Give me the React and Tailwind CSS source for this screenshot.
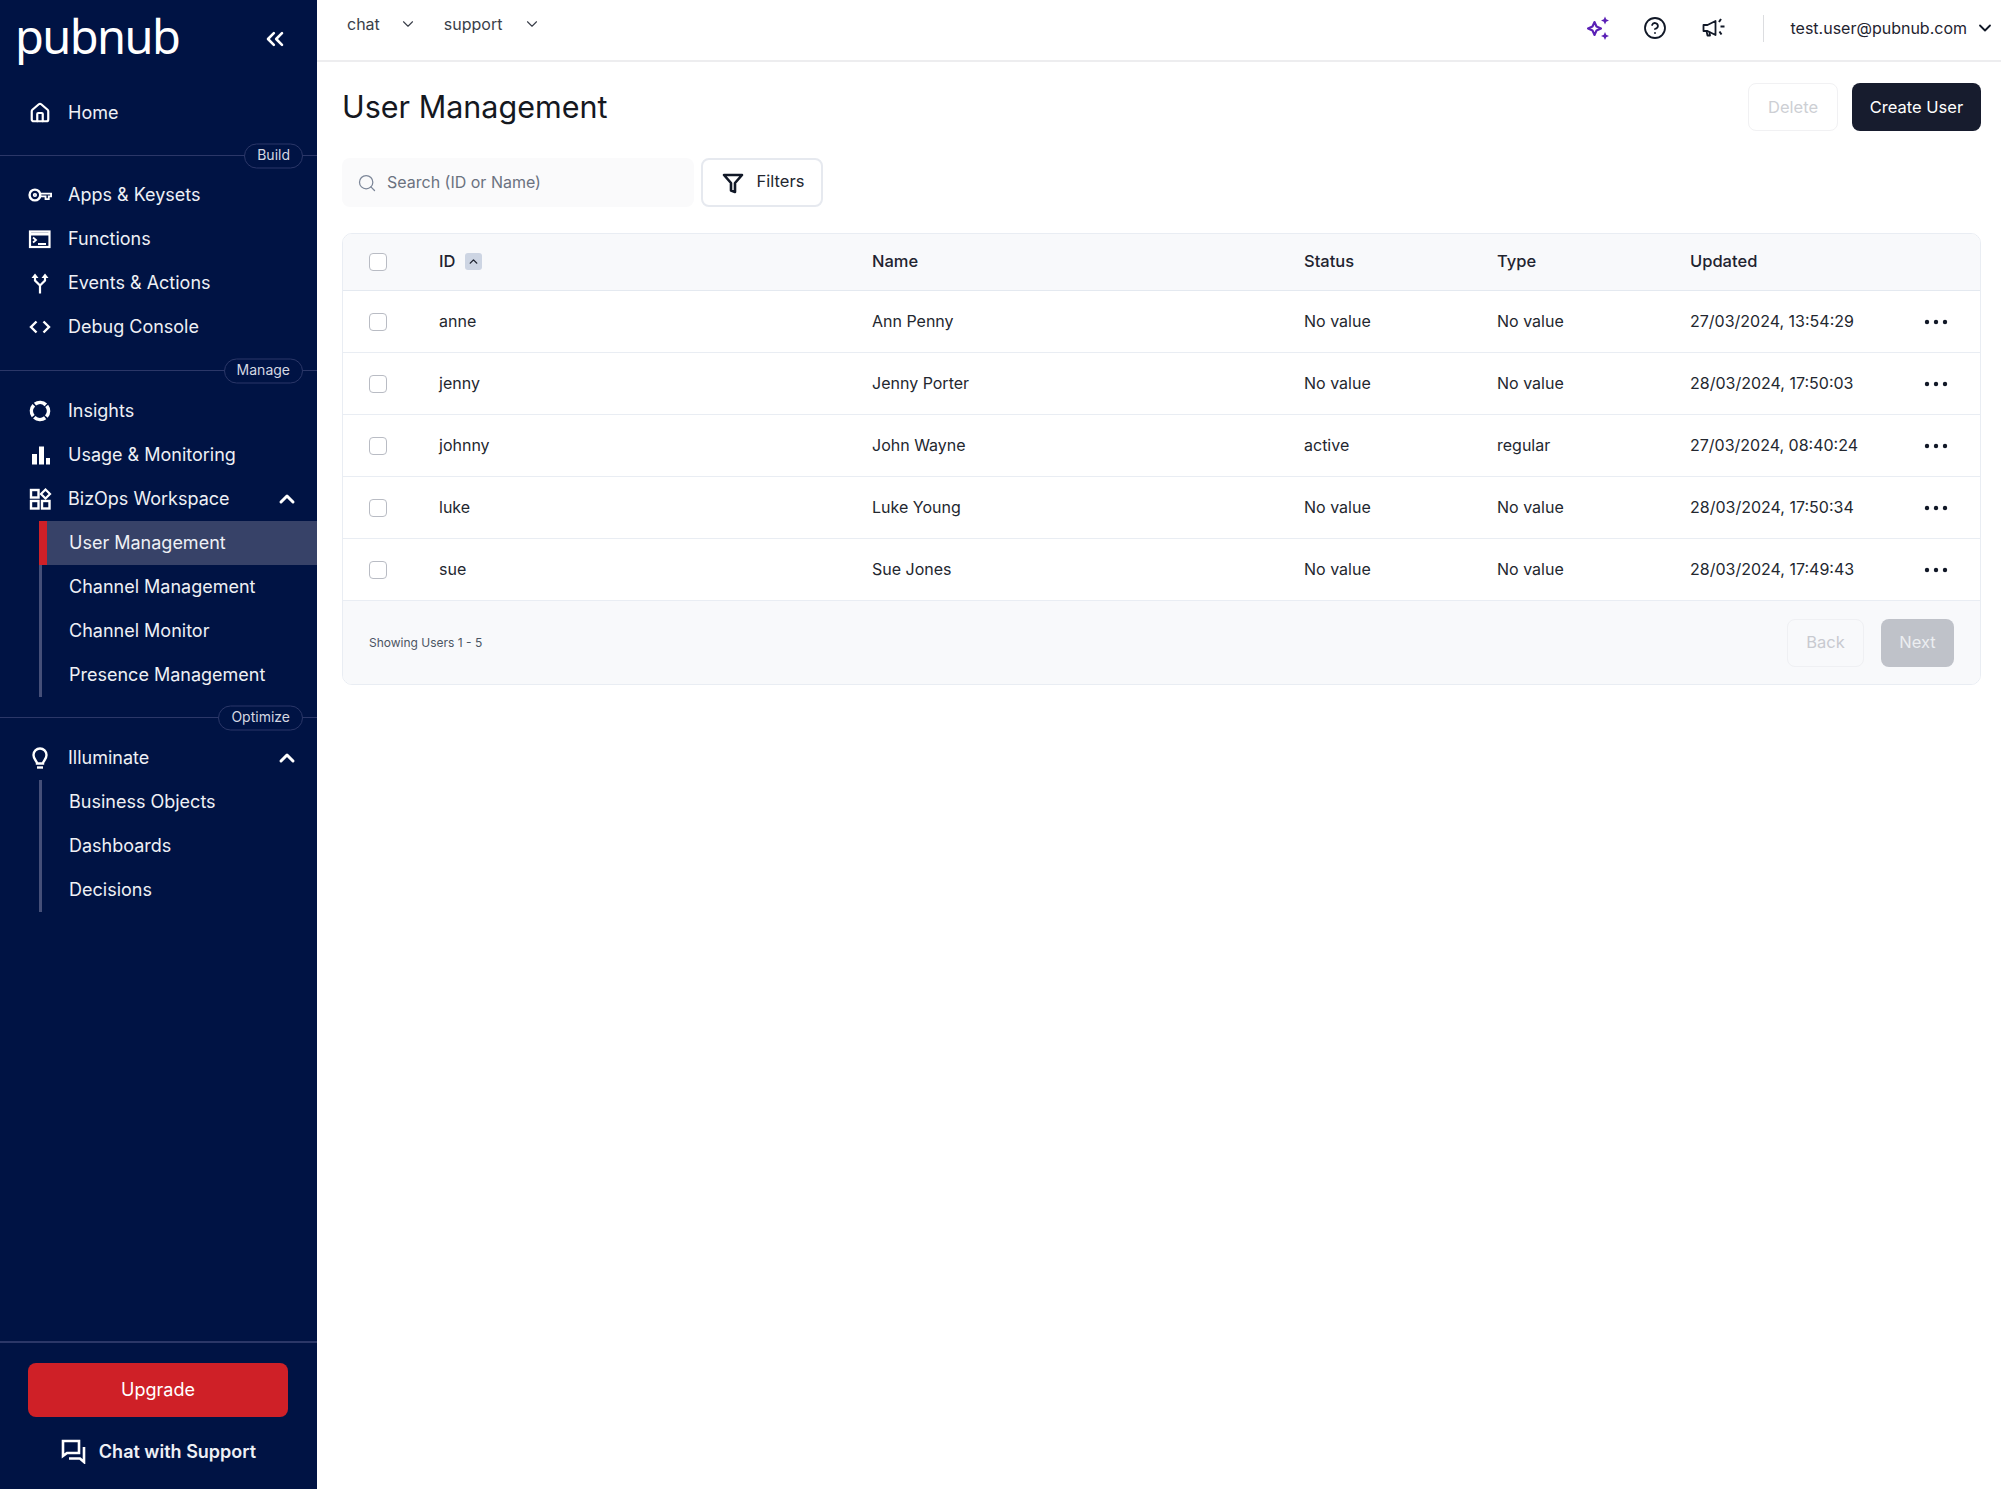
import React from "react";
import { ChevronDown, ChevronUp, ChevronsLeft, CircleHelp, House, Search } from "lucide-react";

const FONT = "font-['Inter','Liberation_Sans',sans-serif]";

// sidebar icons, drawn to match the reference
const KeyIcon = () => (
  <svg width="26" height="24" viewBox="0 0 26 24" fill="none" stroke="white" strokeWidth="2.6">
    <circle cx="7.5" cy="12" r="5.8" />
    <circle cx="7.5" cy="12" r="1.4" strokeWidth="1.8" />
    <path d="M13.5 10.5H25v3h-2.5v3H19v-3h-5" strokeWidth="2" />
  </svg>
);

const TerminalIcon = () => (
  <svg width="24" height="24" viewBox="0 0 24 24" fill="none" stroke="white">
    <rect x="2" y="4.5" width="19.5" height="15.5" strokeWidth="2.2" />
    <path d="M2 7h19.5" strokeWidth="3" />
    <path d="M5 10.5l3 2.5-3 2.5M10 17h8" strokeWidth="1.8" />
  </svg>
);

const ForkIcon = () => (
  <svg width="24" height="24" viewBox="0 0 24 24" fill="none" stroke="white" strokeWidth="2.2">
    <path d="M12 22.5v-8L7 9.5V6M12 14.5l5-5V6" />
    <path d="M3.5 7L7 2.5 10.5 7zM13.5 7L17 2.5 20.5 7z" fill="white" stroke="none" />
  </svg>
);

const CodeIcon = () => (
  <svg width="24" height="24" viewBox="0 0 24 24" fill="none" stroke="white" strokeWidth="2.4">
    <path d="M8.5 6.5L3 12l5.500 5.500M15.500 6.500L21 12l-5.500 5.500" />
  </svg>
);

const InsightsIcon = () => (
  <svg width="24" height="24" viewBox="0 0 24 24" fill="none" stroke="white" strokeWidth="3.6">
    <circle cx="12" cy="12" r="8.5" strokeDasharray="11.7 1.65" transform="rotate(-38 12 12)" />
  </svg>
);

const BarsIcon = () => (
  <svg width="24" height="24" viewBox="0 0 24 24" fill="white">
    <rect x="4" y="11" width="5" height="10.5" />
    <rect x="11" y="3.5" width="5" height="18" />
    <rect x="18" y="15" width="4" height="6.5" />
  </svg>
);

const WidgetsIcon = () => (
  <svg width="24" height="24" viewBox="0 0 24 24" fill="none" stroke="white" strokeWidth="2.4">
    <rect x="3" y="3" width="7.5" height="7.5" />
    <rect x="3" y="14" width="7.5" height="7.5" />
    <rect x="14" y="14" width="7.5" height="7.5" />
    <path d="M17.5 2.5l4.5 4.5-4.5 4.5L13 7z" strokeWidth="2.2" />
  </svg>
);

const BulbIcon = () => (
  <svg width="24" height="24" viewBox="0 0 24 24" fill="none" stroke="white" strokeWidth="2.4">
    <path d="M9 17.5c0-2.5-3.5-4-3.5-8.5a6.5 6.5 0 0 1 13 0c0 4.5-3.5 6-3.5 8.5z" />
    <path d="M9 21.5h6" />
  </svg>
);

const ChatIcon = () => (
  <svg width="26" height="26" viewBox="0 0 26 26" fill="none" stroke="white" strokeWidth="2.6">
    <path d="M2 3h16v12H6l-4 3z" />
    <path d="M23 9v15l-4-3.5H8" />
  </svg>
);

const SparkIcon = () => (
  <svg width="26" height="26" viewBox="0 0 26 26" fill="none" stroke="#5b21b6" strokeWidth="2.1" strokeLinejoin="round">
    <path d="M9.5 7l2 4.5 4.5 2-4.5 2-2 4.5-2-4.5-4.5-2 4.5-2z" />
    <path d="M20 1.5l1.2 2.8 2.8 1.200-2.800 1.200L20 9.500l-1.200-2.800L16 5.500l2.800-1.200zM20 17l1.200 2.800 2.800 1.200-2.800 1.200L20 25l-1.200-2.800L16 21l2.800-1.200z" fill="#5b21b6" stroke="none" />
  </svg>
);

const MegaphoneIcon = () => (
  <svg width="26" height="24" viewBox="0 0 26 24" fill="none" stroke="#111827" strokeWidth="1.8" strokeLinejoin="round">
    <path d="M2.5 9h4l8-4v14l-8-4h-4z" />
    <path d="M5.500 15l1 4.500H9l-.6-3.500" />
    <path d="M18 6l2-3M19.500 10.500h4M18.500 15.500l2 3" strokeWidth="2" />
  </svg>
);

const FunnelIcon = () => (
  <svg width="22" height="22" viewBox="0 0 22 22" fill="none" stroke="#111827" strokeWidth="2.6" strokeLinejoin="round">
    <path d="M2 3h18l-7 8v9l-4-1.500V11z" />
  </svg>
);

const DotsIcon = () => (
  <svg width="24" height="6" viewBox="0 0 24 6" fill="#111827">
    <circle cx="3" cy="3" r="2.2" />
    <circle cx="12" cy="3" r="2.2" />
    <circle cx="21" cy="3" r="2.2" />
  </svg>
);

function NavRow({ icon, label, open }) {
  return (
    <div className="flex h-11 items-center gap-4 pl-7 pr-[18px] text-[18px] text-[#eef0f5]">
      <span className="flex w-6 justify-center">{icon}</span>
      <span className="flex-1 pb-[1px]">{label}</span>
      {open && <ChevronUp size={24} strokeWidth={3} className="text-white" />}
    </div>
  );
}

function SubNav({ items, active }) {
  return (
    <div className="ml-[39px] border-l-[3px] border-[#454f78]">
      {items.map((item) => (
        <div
          key={item}
          className={
            item === active
              ? "relative -ml-[3px] flex h-11 items-center border-l-[8px] border-[#cf2027] bg-[#374268] pb-[1px] pl-[22px] text-[18px] text-[#eef0f5]"
              : "flex h-11 items-center pb-[1px] pl-[27px] text-[18px] text-[#eef0f5]"
          }
        >
          {item}
        </div>
      ))}
    </div>
  );
}

function Section({ label, className }) {
  return (
    <div className={`relative h-px bg-[#2b3768] ${className}`}>
      <span className="absolute right-[14px] top-1/2 flex h-[25px] -translate-y-1/2 items-center rounded-full border border-[#2b3768] bg-[#001344] px-3 pb-[3px] text-[14px] text-[#d5d8e2]">
        {label}
      </span>
    </div>
  );
}

function Sidebar() {
  return (
    <aside className="flex h-[1489px] w-[317px] shrink-0 flex-col bg-[#001344]">
      <div className="flex h-[91px] items-start justify-between pl-[15px] pr-[28px]">
        <span className="mt-[5px] text-[47px] leading-[62px] font-normal tracking-[-1.6px] text-white font-['Noto_Sans',sans-serif]">pubnub</span>
        <ChevronsLeft size={28} strokeWidth={2.2} className="mt-[25px] text-white" />
      </div>
      <NavRow icon={<House size={22} strokeWidth={2.4} className="text-white" />} label="Home" />
      <Section label="Build" className="mt-5 mb-[17px]" />
      <NavRow icon={<KeyIcon />} label="Apps & Keysets" />
      <NavRow icon={<TerminalIcon />} label="Functions" />
      <NavRow icon={<ForkIcon />} label="Events & Actions" />
      <NavRow icon={<CodeIcon />} label="Debug Console" />
      <Section label="Manage" className="mt-[21px] mb-[18px]" />
      <NavRow icon={<InsightsIcon />} label="Insights" />
      <NavRow icon={<BarsIcon />} label="Usage & Monitoring" />
      <NavRow icon={<WidgetsIcon />} label="BizOps Workspace" open />
      <SubNav
        items={["User Management", "Channel Management", "Channel Monitor", "Presence Management"]}
        active="User Management"
      />
      <Section label="Optimize" className="mt-5 mb-[18px]" />
      <NavRow icon={<BulbIcon />} label="Illuminate" open />
      <SubNav items={["Business Objects", "Dashboards", "Decisions"]} />
      <div className="mt-auto border-t-2 border-[#2b3768] px-7 pt-[20px] pb-[21px]">
        <div className="flex h-[54px] w-[260px] items-center justify-center rounded-lg bg-[#cf2027] pb-[2px] text-[18px] text-white">
          Upgrade
        </div>
        <div className="mt-[17px] flex h-[34px] items-center justify-center gap-3 text-[18px] font-semibold text-[#eef0f5]">
          <ChatIcon />
          Chat with Support
        </div>
      </div>
    </aside>
  );
}

function TopBar() {
  return (
    <header className="flex h-[62px] shrink-0 border-b-2 border-[#ededef] pl-[30px] pr-[6px]">
      <div className="flex items-start gap-[27px] pt-[12px] text-[16px] text-[#3a3f4a]">
        <span className="flex items-center gap-[19px]">chat <ChevronDown size={18} strokeWidth={1.5} /></span>
        <span className="flex items-center gap-[21px]">support <ChevronDown size={18} strokeWidth={1.5} /></span>
      </div>
      <div className="ml-auto flex items-center pb-[4px]">
        <SparkIcon />
        <CircleHelp size={24} strokeWidth={1.8} className="ml-[32px] text-[#111827]" />
        <span className="ml-[34px]"><MegaphoneIcon /></span>
        <div className="ml-[36px] h-[27px] w-px bg-[#dcdde0]" />
        <span className="ml-[26px] flex items-center gap-[8px] text-[16px] text-[#1f2430]">
          test.user@pubnub.com <ChevronDown size={20} strokeWidth={2.2} className="text-[#111827]" />
        </span>
      </div>
    </header>
  );
}

const COLS = "grid grid-cols-[70px_433px_432px_193px_193px_1fr] items-center pl-[26px]";

const users = [
  { id: "anne", name: "Ann Penny", status: "No value", type: "No value", updated: "27/03/2024, 13:54:29" },
  { id: "jenny", name: "Jenny Porter", status: "No value", type: "No value", updated: "28/03/2024, 17:50:03" },
  { id: "johnny", name: "John Wayne", status: "active", type: "regular", updated: "27/03/2024, 08:40:24" },
  { id: "luke", name: "Luke Young", status: "No value", type: "No value", updated: "28/03/2024, 17:50:34" },
  { id: "sue", name: "Sue Jones", status: "No value", type: "No value", updated: "28/03/2024, 17:49:43" },
];

const Checkbox = ({ className }) => (
  <span className={`block h-[18px] w-[18px] rounded-[4px] border border-[#b9bcc4] bg-white ${className}`} />
);

function UsersTable() {
  return (
    <div className="mt-[26px] overflow-hidden rounded-[10px] border border-[#e9edf3]">
      <div className={`${COLS} h-[57px] border-b border-[#e4e9f0] bg-[#f8f9fb] pb-[1px] text-[16.5px] font-medium text-[#1f2430]`}>
        <Checkbox />
        <span className="flex items-center gap-[10px]">
          ID
          <span className="flex h-[17px] w-[17px] items-center justify-center rounded-[3px] bg-[#cdd5e3]">
            <ChevronUp size={13} strokeWidth={2.6} className="text-[#1f2430]" />
          </span>
        </span>
        <span>Name</span>
        <span>Status</span>
        <span>Type</span>
        <span>Updated</span>
      </div>
      {users.map((user) => (
        <div key={user.id} className={`${COLS} h-[62px] border-b border-[#e9edf3] pb-[2px] text-[16px] text-[#23272f]`}>
          <Checkbox className="mt-[2px]" />
          <span>{user.id}</span>
          <span>{user.name}</span>
          <span>{user.status}</span>
          <span>{user.type}</span>
          <span className="flex items-center justify-between pr-[32px]">
            {user.updated}
            <span className="mt-[2px]"><DotsIcon /></span>
          </span>
        </div>
      ))}
      <div className="flex h-[83px] items-center justify-between bg-[#f8f9fb] pl-[26px] pr-[26px]">
        <span className="text-[12px] text-[#4b5563]">Showing Users 1 - 5</span>
        <div className="flex gap-[17px]">
          <span className="flex h-[48px] w-[77px] items-center justify-center rounded-lg border border-[#eff0f3] text-[16.5px] text-[#c8cad0]">Back</span>
          <span className="flex h-[48px] w-[73px] items-center justify-center rounded-lg bg-[#bfc2c9] text-[16.5px] text-[#eceef1]">Next</span>
        </div>
      </div>
    </div>
  );
}

export default function App() {
  return (
    <div className={`flex h-[1489px] w-full overflow-hidden bg-white ${FONT}`}>
      <Sidebar />
      <main className="flex min-w-0 flex-1 flex-col">
        <TopBar />
        <div className="pl-[25px] pr-[20px]">
          <div className="mt-[21px] flex h-12 items-center justify-between">
            <h1 className="text-[30.5px] font-normal text-[#15181f]">User Management</h1>
            <div className="flex gap-[14px]">
              <span className="flex h-12 w-[90px] items-center justify-center rounded-lg border border-[#f1f1f3] text-[16.5px] text-[#cdcfd4]">Delete</span>
              <span className="flex h-12 w-[129px] items-center justify-center rounded-lg bg-[#171c2e] text-[16.5px] text-white">Create User</span>
            </div>
          </div>
          <div className="mt-[27px] flex gap-[7px]">
            <div className="flex h-[49px] w-[352px] items-center gap-[10px] rounded-lg bg-[#fafafb] pl-[15px] text-[16px] text-[#6b7280]">
              <Search size={20} strokeWidth={1.5} className="text-[#7c8698]" />
              <span className="pb-[2px]">Search (ID or Name)</span>
            </div>
            <div className="flex h-[49px] w-[122px] items-center justify-center gap-[13px] rounded-lg border-2 border-[#e6e9ef] pl-[2px] text-[16.5px] text-[#23272f]">
              <FunnelIcon />
              <span className="pb-[2px]">Filters</span>
            </div>
          </div>
          <UsersTable />
        </div>
      </main>
    </div>
  );
}
